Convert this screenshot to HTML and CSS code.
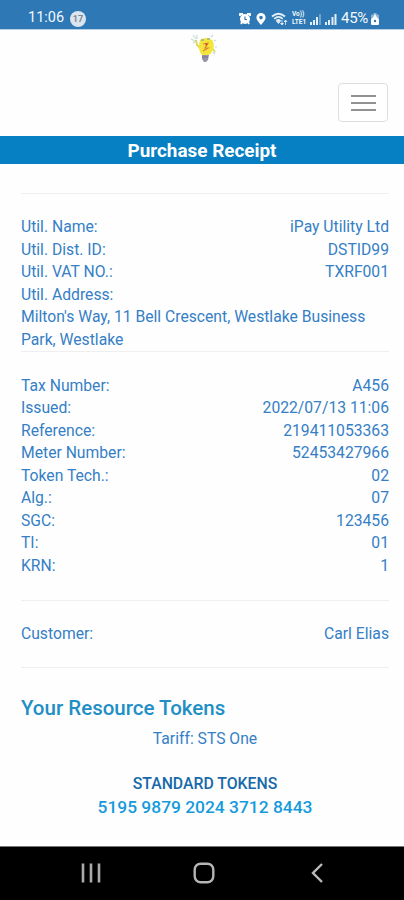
FILE: index.html
```html
<!DOCTYPE html>
<html lang="en">
<head>
    <meta charset="UTF-8">
    <meta name="viewport" content="width=device-width, initial-scale=1.0">
    <title>Purchase Receipt</title>
    <link rel="stylesheet" href="styles.css">
</head>
<body>

    <div class="status-bar">
        <span class="time">11:06</span>
        <span class="badge">17</span>
        <div class="status-icons">
            <!-- alarm -->
            <svg class="alarm" width="12" height="12" viewBox="0 0 12 12">
                <path d="M1 3V1h3M11 3V1H8M2 11l1-2M10 11L9 9" fill="none" stroke="#fff" stroke-width="1.8"/>
                <circle cx="6" cy="6" r="5" fill="#fff"/>
                <path d="M6 3.5V6.5H8" fill="none" stroke="#2d78b5" stroke-width="1.1"/>
            </svg>
            <!-- location -->
            <svg class="pin" width="10" height="12" viewBox="0 0 10 12">
                <path fill="#fff" fill-rule="evenodd" d="M5 0a4.6 4.6 0 0 0-4.6 4.6C.4 7.5 5 12 5 12s4.6-4.5 4.6-7.4A4.6 4.6 0 0 0 5 0zm0 2.8a1.8 1.8 0 1 1 0 3.6 1.8 1.8 0 0 1 0-3.6z"/>
            </svg>
            <!-- wifi -->
            <svg class="wifi" width="17" height="14" viewBox="0 0 17 14">
                <path d="M1 4.5Q7.5-1 14 4.5M3.2 6.8Q7.5 3 11.8 6.8M5.3 9Q7.5 7 9.5 9" fill="none" stroke="#e4eef6" stroke-width="1.7"/>
                <path d="M7.5 11.5L5.7 9.5h3.6zM11 13V8M9.5 11l1.5 2 1.5-2M14.5 8v5M13 10l1.5-2 1.5 2" fill="#e4eef6" stroke="#e4eef6" stroke-width=".8"/>
            </svg>
            <div class="volte">
                <span>Vo))</span>
                <span>LTE1</span>
            </div>
            <svg class="signal" width="11" height="12" viewBox="0 0 11 12">
                <path fill="#e4eef6" d="M0 9h2v3H0zM3 7h2v5H3zM6 4h2v8H6z"/>
                <path fill="#6fa5cf" d="M9 1h2v11H9z"/>
            </svg>
            <svg class="signal2" width="12" height="12" viewBox="0 0 12 12">
                <path fill="#e4eef6" d="M0 9h2v3H0zM3 7h2v5H3zM6.5 4h2v8h-2zM9.5 1h2v11h-2z"/>
            </svg>
            <span class="percent">45%</span>
            <!-- battery -->
            <svg class="battery" width="8" height="12" viewBox="0 0 8 12">
                <path fill="#8fb6d8" d="M2.5 0h3v1.5H7q1 0 1 1V7H0V2.5q0-1 1-1h1.5z"/>
                <path fill="#fff" d="M4 1l2 3.5 2 2V11q0 1-1 1H1q-1 0-1-1V6.500l2-2z"/>
                <circle cx="4" cy="8" r="1.2" fill="#2d78b5"/>
            </svg>
        </div>
    </div>

    <header>
        <svg class="logo" width="28" height="30" viewBox="0 0 28 30">
            <path d="M3 1l3 4M1 5l4 2M7 1v4M3 9l3-2M21 3l2-2M24 7l2-1M25 13h2M23 18l2 2" fill="none" stroke="#c6dcd8" stroke-width="1.2"/>
            <path d="M6 6l1 5 5 5M22 14l3 4" fill="none" stroke="#dfd75b" stroke-width="1.8"/>
            <path fill="#f3e53c" d="M10 6Q16 2 22 6Q25 10 23 15Q22 19 19 21H12Q8 16 9 11z"/>
            <path d="M11 5h3v2h-3zM17 4h3v2h-3z" fill="#b6bd7a"/>
            <path d="M13 10l5-1-3 5h3l-5 3" fill="none" stroke="#e28532" stroke-width="1.2"/>
            <path d="M15 9l3 1-2 2z" fill="#d4482c"/>
            <path d="M12 21h7l-1 5-2 2h-2l-2-3z" fill="#9894a7"/>
            <path d="M12 23h6" stroke="#6f7791"/>
        </svg>
        <button class="menu" aria-label="Menu">
            <span></span>
            <span></span>
            <span></span>
        </button>
    </header>

    <h1>Purchase Receipt</h1>

    <main>
        <section class="utility">
            <div class="row"><span>Util. Name:</span><span>iPay Utility Ltd</span></div>
            <div class="row"><span>Util. Dist. ID:</span><span>DSTID99</span></div>
            <div class="row"><span>Util. VAT NO.:</span><span>TXRF001</span></div>
            <div class="row"><span>Util. Address:</span></div>
            <p>Milton's Way, 11 Bell Crescent, Westlake Business Park, Westlake</p>
        </section>

        <section class="details">
            <div class="row"><span>Tax Number:</span><span>A456</span></div>
            <div class="row"><span>Issued:</span><span>2022/07/13 11:06</span></div>
            <div class="row"><span>Reference:</span><span>219411053363</span></div>
            <div class="row"><span>Meter Number:</span><span>52453427966</span></div>
            <div class="row"><span>Token Tech.:</span><span>02</span></div>
            <div class="row"><span>Alg.:</span><span>07</span></div>
            <div class="row"><span>SGC:</span><span>123456</span></div>
            <div class="row"><span>TI:</span><span>01</span></div>
            <div class="row"><span>KRN:</span><span>1</span></div>
        </section>

        <section class="customer">
            <div class="row"><span>Customer:</span><span>Carl Elias</span></div>
        </section>

        <section class="tokens">
            <h2>Your Resource Tokens</h2>
            <p class="tariff">Tariff: STS One</p>
            <h3>STANDARD TOKENS</h3>
            <p class="token">5195 9879 2024 3712 8443</p>
        </section>
    </main>

    <nav>
        <svg width="20" height="20" viewBox="0 0 20 20">
            <path d="M2 .5v19M10 .5v19M18 .5v19" stroke="#aaa" stroke-width="2.6"/>
        </svg>
        <svg class="home" width="22" height="22" viewBox="0 0 22 22">
            <rect x="1.7" y="1.7" width="18.6" height="18.6" rx="6" fill="none" stroke="#b5b5b5" stroke-width="2.4"/>
        </svg>
        <svg class="back" width="12" height="20" viewBox="0 0 12 20">
            <path d="M11 1L2 10l9 9" fill="none" stroke="#bbb" stroke-width="2.4"/>
        </svg>
    </nav>

</body>
</html>
```

FILE: styles.css
```css
* {
    box-sizing: border-box;
}
body {
    margin: 0;
    height: 900px;
    display: flex;
    flex-direction: column;
    overflow: hidden;
    font-family: Roboto, Arial, sans-serif;
    font-size: 15.7px;
    line-height: 22.5px;
    color: #357fc6;
    background-color: #fefefe;
}
h1, h2, h3, p {
    margin: 0;
}
.status-bar {
    height: 30px;
    padding: 8px 25px 0 28px;
    display: flex;
    align-items: center;
    border-bottom: 1px solid #b4cfe5;
    background-color: #2d78b5;
    color: #f3f8fc;
}
.time {
    width: 37px;
    font-size: 14.5px;
}
.badge {
    width: 16px;
    height: 16px;
    margin-left: 5px;
    border-radius: 50%;
    background-color: #dce5ee;
    color: #7d8892;
    font-size: 9px;
    font-weight: bold;
    line-height: 16px;
    text-align: center;
}
.status-icons {
    margin-left: auto;
    display: flex;
    align-items: center;
}
.pin {
    margin-left: 5px;
}
.wifi {
    margin-left: 5px;
}
.volte {
    width: 15px;
    margin-left: 4px;
    display: flex;
    flex-direction: column;
    font-size: 6.5px;
    font-weight: bold;
    line-height: 7.5px;
}
.signal {
    margin-left: 3px;
}
.signal2 {
    margin-left: 4px;
}
.percent {
    width: 29px;
    margin-left: 4px;
    font-size: 15px;
    letter-spacing: -0.3px;
}
.battery {
    margin-left: 1px;
}
header {
    height: 106px;
    padding: 4px 16px 0;
    display: flex;
    flex-direction: column;
    align-items: center;
}
.logo {
    margin-left: 3px;
}
.menu {
    width: 50px;
    height: 39px;
    margin-top: 19px;
    padding: 0;
    display: flex;
    flex-direction: column;
    align-items: center;
    justify-content: center;
    gap: 5px;
    align-self: flex-end;
    border: 1px solid #dedede;
    border-radius: 4px;
    background-color: #fff;
}
.menu span {
    width: 25px;
    height: 2px;
    background-color: #929292;
}
h1 {
    height: 28px;
    background-color: #0680c2;
    color: #fff;
    font-size: 18.9px;
    font-weight: bold;
    line-height: 30px;
    text-align: center;
}
main {
    flex: 1;
    padding: 29px 15px 0 21px;
}
section {
    border-top: 1px solid #efefef;
}
.utility {
    height: 158px;
    padding-top: 22px;
}
.row {
    display: flex;
    justify-content: space-between;
}
.details {
    height: 249px;
    padding-top: 22.5px;
}
.customer {
    height: 67px;
    padding-top: 22px;
}
.tokens {
    padding-top: 28px;
    text-align: center;
}
h2 {
    color: #218fc5;
    font-size: 20.5px;
    font-weight: 500;
    line-height: 24px;
    text-align: left;
}
.tariff {
    margin-top: 8px;
}
h3 {
    margin-top: 22px;
    color: #1769aa;
    font-size: 15.8px;
    font-weight: 500;
}
.token {
    margin-top: 1px;
    color: #159bdc;
    font-size: 17.4px;
    font-weight: 500;
}
nav {
    height: 54px;
    padding: 0 81px 2px;
    display: flex;
    align-items: center;
    justify-content: space-between;
    border-top: 1px solid #777;
    background-color: #000;
}
.home {
    margin-right: 4px;
}
```
